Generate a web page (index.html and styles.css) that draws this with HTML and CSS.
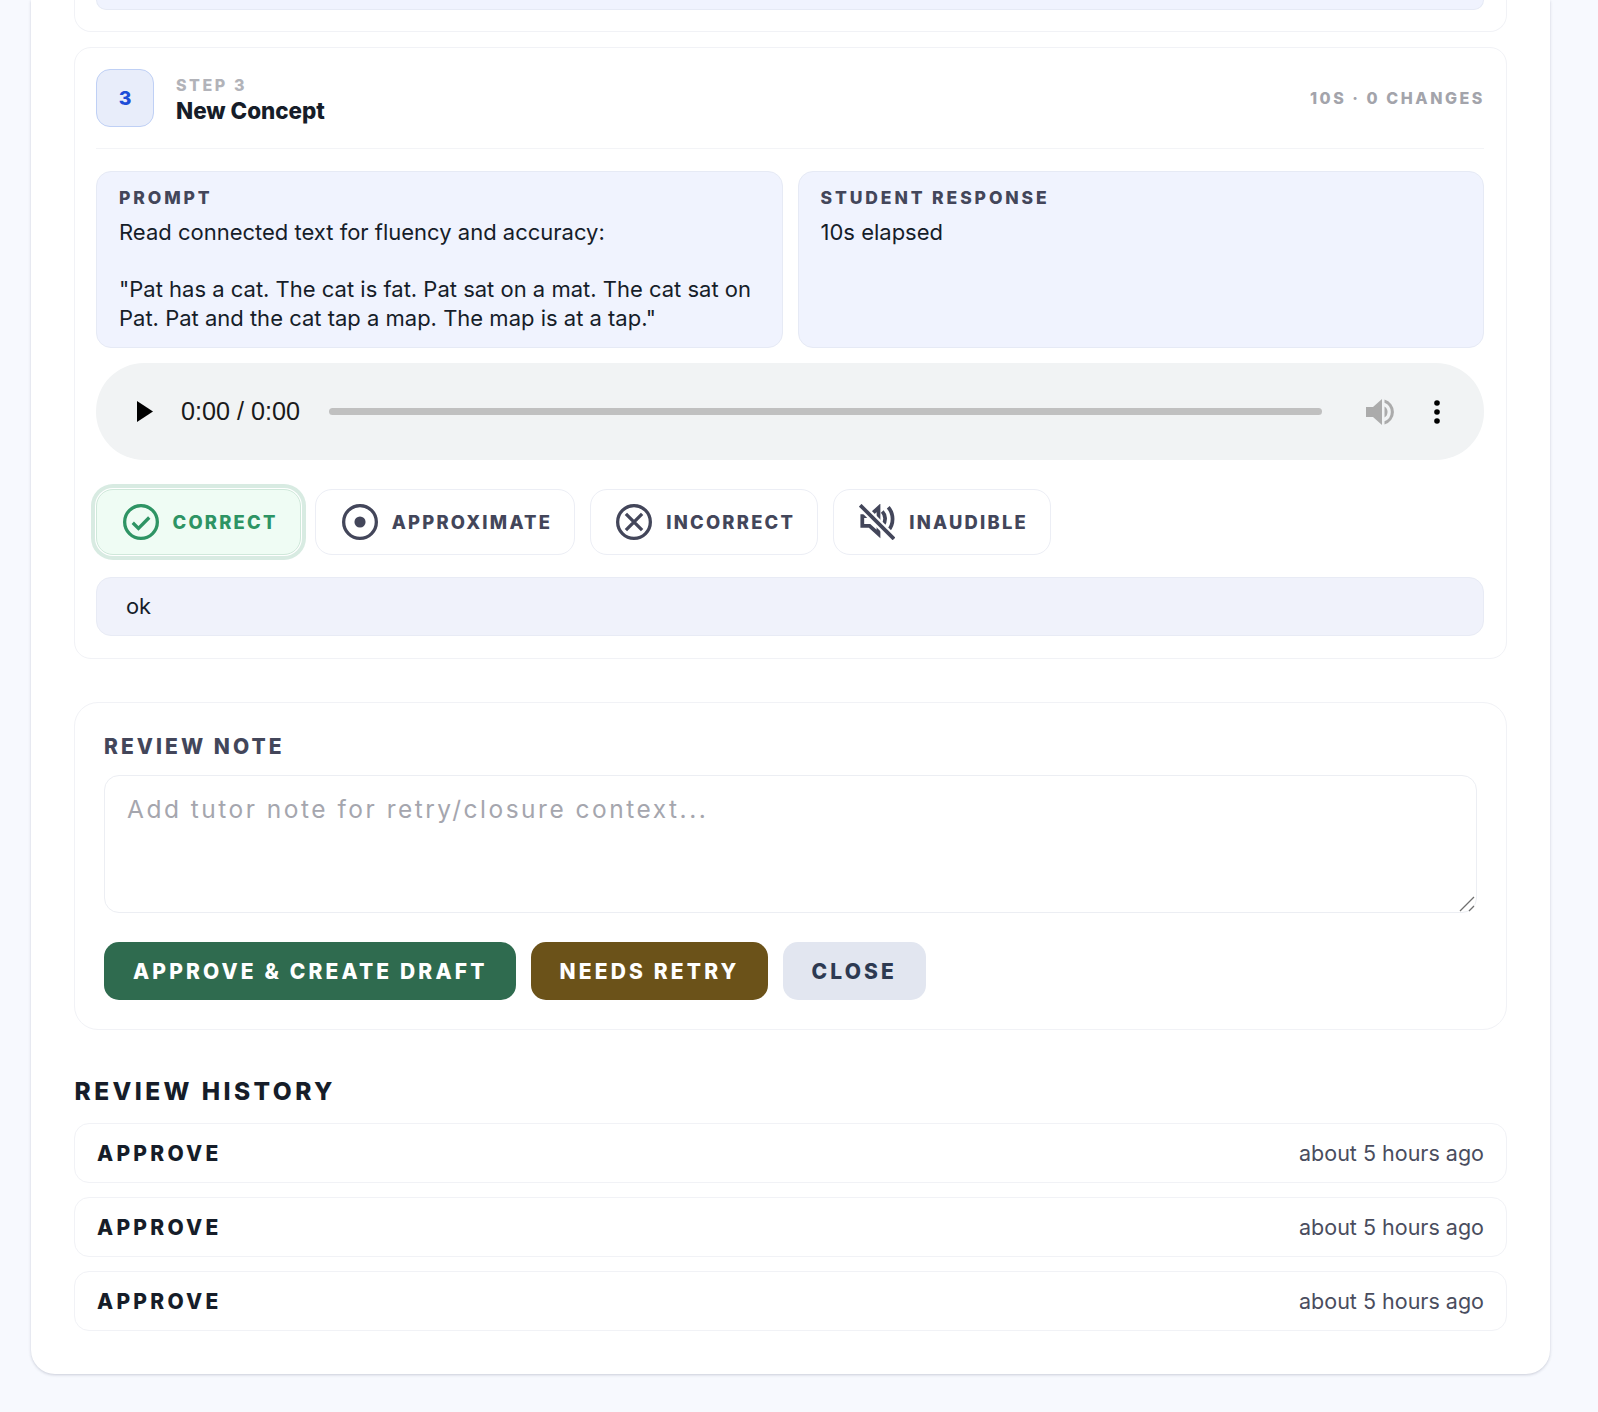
FILE: index.html
```html
<!DOCTYPE html>
<html lang="en">
<head>
<meta charset="utf-8">
<title>Review</title>
<link rel="stylesheet" href="styles.css">
</head>
<body>
<main class="sheet">
  <section class="step step-prev"><div class="panel-tail"></div></section>

  <section class="step">
    <header class="step-head">
      <div class="step-badge">3</div>
      <div class="step-titles">
        <div class="step-kicker">STEP 3</div>
        <div class="step-name">New Concept</div>
      </div>
      <div class="step-meta">10S · 0 CHANGES</div>
    </header>

    <div class="panels">
      <div class="panel">
        <div class="panel-label">PROMPT</div>
        <div class="panel-text">Read connected text for fluency and accuracy:

"Pat has a cat. The cat is fat. Pat sat on a mat. The cat sat on Pat. Pat and the cat tap a map. The map is at a tap."</div>
      </div>
      <div class="panel">
        <div class="panel-label">STUDENT RESPONSE</div>
        <div class="panel-text">10s elapsed</div>
      </div>
    </div>

    <div class="player">
      <svg class="play" viewBox="0 0 16 21"><path d="M0 0 16 10.5 0 21z"/></svg>
      <span class="time">0:00 / 0:00</span>
      <div class="track"></div>
      <svg class="vol" viewBox="0 0 28 26"><path d="M0 8h7l9-8v26l-9-8H0z"/><path d="M18.5 7.5a6.5 6.5 0 0 1 0 11z"/><path d="M18.5 0.5a13 13 0 0 1 0 25v-3.2a10 10 0 0 0 0-18.600z"/></svg>
      <svg class="dots" viewBox="0 0 6 24"><circle cx="3" cy="3" r="2.8"/><circle cx="3" cy="12" r="2.8"/><circle cx="3" cy="21" r="2.8"/></svg>
    </div>

    <div class="marks">
      <button class="mark mark-on">
        <svg class="mark-icon" viewBox="0 0 24 24"><circle cx="12" cy="12" r="10.900"/><path d="m6.500 12.500 3.800 3.800L17.500 9"/></svg>
        CORRECT
      </button>
      <button class="mark">
        <svg class="mark-icon" viewBox="0 0 24 24"><circle cx="12" cy="12" r="10.900"/><circle class="fill" cx="12" cy="12" r="3.700"/></svg>
        APPROXIMATE
      </button>
      <button class="mark">
        <svg class="mark-icon" viewBox="0 0 24 24"><circle cx="12" cy="12" r="10.900"/><path d="m6.600 6.600 10.800 10.800M17.400 6.600 6.600 17.400"/></svg>
        INCORRECT
      </button>
      <button class="mark">
        <svg class="mark-icon mark-icon-heavy" viewBox="0 0 24 24"><path d="M7 8H2.200v6.500H7l6 5.500V2.500z"/><path d="M15.500 5a7 7 0 0 1 .5 9M19.500 2.200a12 12 0 0 1 0 15.600"/><path class="halo" d="M.8.8l22.500 22.500"/><path d="M.8.8l22.500 22.500"/></svg>
        INAUDIBLE
      </button>
    </div>

    <div class="note-row">ok</div>
  </section>

  <section class="review">
    <label class="review-label" for="note">REVIEW NOTE</label>
    <div class="review-field">
      <textarea id="note" class="review-input" placeholder="Add tutor note for retry/closure context..."></textarea>
      <svg class="grip" viewBox="0 0 16 16"><path d="M1 15 15 1M10 15l5-5"/></svg>
    </div>
    <div class="actions">
      <button class="action action-approve">APPROVE &amp; CREATE DRAFT</button>
      <button class="action action-retry">NEEDS RETRY</button>
      <button class="action action-close">CLOSE</button>
    </div>
  </section>

  <h2 class="history-title">REVIEW HISTORY</h2>
  <ul class="history">
    <li class="history-row"><strong>APPROVE</strong><span>about 5 hours ago</span></li>
    <li class="history-row"><strong>APPROVE</strong><span>about 5 hours ago</span></li>
    <li class="history-row"><strong>APPROVE</strong><span>about 5 hours ago</span></li>
  </ul>
</main>
</body>
</html>
```
FILE: styles.css
```css
* { box-sizing: border-box; }
html, body { margin: 0; height: 1412px; overflow: hidden; }
body {
  background: #f7f9fe;
  color: #161d29;
  font-family: Inter, "Liberation Sans", sans-serif;
  padding: 0 48px 0 31px;
}
.sheet {
  width: 1519px;
  height: 1374px;
  background: #fff;
  border-radius: 0 0 24px 24px;
  box-shadow: 0 1px 3px rgba(40, 50, 80, .22);
  padding: 0 43px;
}
.step {
  border: 1px solid #f1f2f6;
  border-radius: 17px;
  padding: 21px 22px 21px 21px;
  height: 612px;
  margin-top: 15px;
}
.step-prev {
  height: 32px;
  margin-top: 0;
  padding: 0 22px 0 21px;
  border-top: 0;
  border-radius: 0 0 17px 17px;
}
.panel-tail {
  height: 10px;
  background: #f0f3fe;
  border: 1px solid #e6eaf5;
  border-top: 0;
  border-radius: 0 0 14px 14px;
}
.step-head {
  display: flex;
  align-items: center;
  gap: 22px;
  height: 80px;
  padding-bottom: 21px;
  border-bottom: 1px solid #f3f4f7;
}
.step-badge {
  width: 58px;
  height: 58px;
  display: flex;
  align-items: center;
  justify-content: center;
  border: 1px solid #bfd0f5;
  border-radius: 14px;
  background: #e8edfa;
  color: #1d4ed8;
  font-weight: 800;
  font-size: 19.25px;
}
.step-titles { flex: 1; padding-top: 2px; }
.step-kicker {
  font-size: 16px;
  font-weight: 800;
  letter-spacing: .16em;
  color: #b2b3b9;
  line-height: 24px;
}
.step-name {
  font-size: 22.4px;
  font-weight: 800;
  line-height: 28px;
}
.step-meta {
  font-size: 16px;
  font-weight: 800;
  letter-spacing: .16em;
  color: #a3a4ab;
  margin-right: -1px;
}
.panels {
  display: grid;
  grid-template-columns: 1fr 1fr;
  gap: 15px;
  margin-top: 22px;
}
.panel {
  height: 177px;
  background: #f0f3fe;
  border: 1px solid #e6eaf5;
  border-radius: 15px;
  padding: 13px 22px;
}
.panel-label {
  font-size: 17.5px;
  font-weight: 800;
  letter-spacing: .165em;
  line-height: 26px;
  color: #43465a;
}
.panel-text {
  font-size: 22px;
  line-height: 28.5px;
  margin-top: 7px;
  white-space: pre-line;
}
.player {
  display: flex;
  align-items: center;
  height: 97px;
  margin-top: 15px;
  padding: 0 44px 0 41px;
  border-radius: 48px;
  background: #f1f3f4;
}
.play { width: 16px; height: 21px; margin-right: 28px; }
.time { font-family: "Liberation Sans", Arial, sans-serif; font-size: 25.2px; color: #1a1a1a; width: 148px; }
.track { flex: 1; height: 7px; border-radius: 4px; background: #c0c0c0; }
.vol { width: 28px; height: 26px; fill: #ababab; margin-left: 44px; }
.dots { width: 6px; height: 24px; margin-left: 40px; }
.marks { display: flex; gap: 14.5px; margin-top: 29px; }
.mark {
  display: flex;
  align-items: center;
  gap: 14px;
  height: 66px;
  padding: 0 22px 0 25.5px;
  border: 1px solid #eceef5;
  border-radius: 17px;
  background: #fff;
  color: #43465a;
  font: 800 18.375px Inter, sans-serif;
  letter-spacing: .122em;
}
.mark-icon {
  width: 36px;
  height: 36px;
  fill: none;
  stroke: currentColor;
  stroke-width: 2.2;
  flex: none;
}
.mark-icon .fill { fill: currentColor; stroke: none; }
.mark-icon .halo { stroke: #fff; stroke-width: 5.500; }
.mark-icon-heavy { stroke-width: 2.500; }
.mark-on {
  border-color: #cfe8da;
  background: #effcf4;
  color: #2e9464;
  box-shadow: 0 0 0 1px #fff, 0 0 0 5px #d8ebe2;
}
.note-row {
  height: 59px;
  margin-top: 22px;
  padding: 0 29px 2px;
  display: flex;
  align-items: center;
  background: #f0f2fb;
  border: 1px solid #e8ebf5;
  border-radius: 15px;
  font-size: 21.875px;
}
.review {
  margin-top: 43px;
  height: 328px;
  padding: 29px;
  border: 1px solid #f1f2f6;
  border-radius: 24px;
}
.review-label {
  display: block;
  font-size: 21px;
  font-weight: 800;
  letter-spacing: .145em;
  line-height: 30px;
  color: #43465a;
}
.review-field { position: relative; margin-top: 13px; }
.review-input {
  display: block;
  width: 100%;
  height: 138px;
  padding: 18px 22px;
  border: 1px solid #eceef3;
  border-radius: 15px;
  background: #fff;
  font: 24.5px Inter, sans-serif;
  letter-spacing: .102em;
  outline: 0;
  resize: none;
}
.review-input::placeholder { color: #a5a6ae; opacity: 1; }
.grip {
  position: absolute;
  right: 2px;
  bottom: 1px;
  width: 16px;
  height: 16px;
  fill: none;
  stroke: #6f6f6f;
  stroke-width: 1.3;
}
.actions { display: flex; gap: 14.5px; margin-top: 29px; }
.action {
  height: 58px;
  padding: 0 28.5px 0 29px;
  border: 0;
  border-radius: 15px;
  font: 800 21px Inter, sans-serif;
  letter-spacing: .15em;
  color: #fff;
}
.action-approve { background: #2f6b4f; }
.action-retry { background: #6b5219; }
.action-close { background: #e2e6f0; color: #2d3a52; }
.history-title {
  margin: 46px 0 0;
  padding-left: .5px;
  font-size: 24.5px;
  font-weight: 800;
  letter-spacing: .14em;
  line-height: 30px;
}
.history {
  list-style: none;
  margin: 17px 0 0;
  padding: 0;
  display: flex;
  flex-direction: column;
  gap: 14.500px;
}
.history-row {
  display: flex;
  justify-content: space-between;
  align-items: center;
  height: 59.500px;
  padding: 2px 22px 0;
  border: 1px solid #f1f2f6;
  border-radius: 15px;
}
.history-row strong { font-size: 21px; font-weight: 800; letter-spacing: .155em; }
.history-row span { font-size: 21.500px; color: #4a4d5e; padding-bottom: 2px; }
```
